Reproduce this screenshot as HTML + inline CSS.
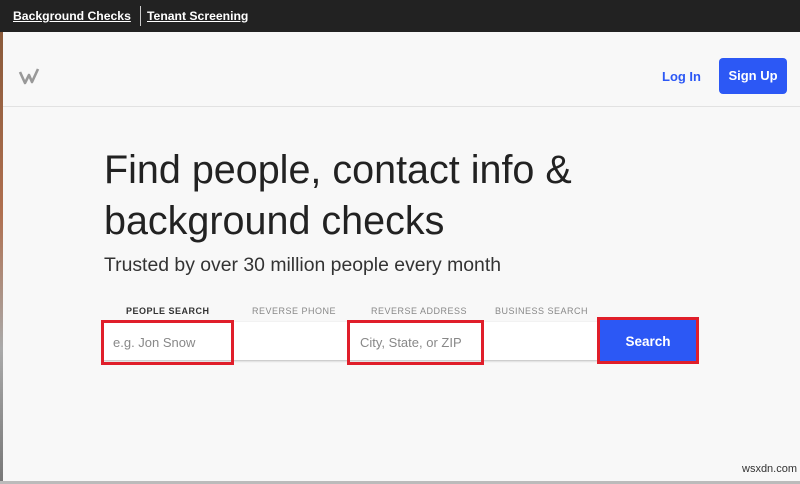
<!DOCTYPE html>
<html><head><style>
body{margin:0;width:800px;height:484px;background:#f8f8f8;font-family:"Liberation Sans",sans-serif;position:relative;overflow:hidden}
.top{position:absolute;left:0;top:0;width:800px;height:32px;background:#222}
.top a{position:absolute;top:9px;color:#fff;font-weight:bold;font-size:12.2px;text-decoration:underline}
.edge{position:absolute;left:0;top:32px;width:3px;height:452px;background:linear-gradient(#8a5a3a,#b07050 40%,#aaa 70%,#777)}
.hdr{position:absolute;left:3px;top:32px;width:797px;height:74px;background:#f8f8f8;border-bottom:1px solid #e2e2e2}
.abs{position:absolute}
h1{position:absolute;left:104px;top:145px;margin:0;font-weight:normal;font-size:39.5px;line-height:51px;color:#222}
.sub{left:104px;top:254px;font-size:19.4px;color:#333}
.tab{top:306px;font-size:9px;letter-spacing:.5px;color:#888}
.box{border:3px solid #e01e2a;box-sizing:border-box}
</style></head><body>
<div class="top"><a style="left:13px">Background Checks</a><div class="abs" style="left:140px;top:6px;width:1px;height:20px;background:#ccc"></div><a style="left:147px">Tenant Screening</a></div>
<div class="edge"></div>
<div class="hdr">
<svg class="abs" style="left:14px;top:34px" width="24" height="20"><path d="M3 6 L8 17 L12 9 L15 16 L21 3" stroke="#999" stroke-width="2.6" fill="none" stroke-linejoin="round"/></svg>
<div class="abs" style="left:659px;top:37px;color:#2c58f5;font-weight:bold;font-size:13px">Log In</div>
<div class="abs" style="left:716px;top:26px;width:68px;height:36px;background:#2c58f5;border-radius:4px;color:#fff;font-weight:bold;font-size:13px;text-align:center;line-height:36px">Sign Up</div>
</div>
<h1>Find people, contact info &amp;<br>background checks</h1>
<div class="abs sub">Trusted by over 30 million people every month</div>
<div class="abs tab" style="left:126px;color:#333;font-weight:bold">PEOPLE SEARCH</div>
<div class="abs tab" style="left:252px">REVERSE PHONE</div>
<div class="abs tab" style="left:371px">REVERSE ADDRESS</div>
<div class="abs tab" style="left:495px">BUSINESS SEARCH</div>
<div class="abs" style="left:103px;top:322px;width:495px;height:38px;background:#fff;box-shadow:0 1px 2px #bbb"></div>
<div class="abs" style="left:113px;top:335px;font-size:13px;color:#888">e.g. Jon Snow</div>
<div class="abs" style="left:360px;top:335px;font-size:13px;color:#888">City, State, or ZIP</div>
<div class="abs" style="left:600px;top:320px;width:96px;height:41px;background:#2c58f5;color:#fff;font-weight:bold;font-size:13.5px;text-align:center;line-height:43px">Search</div>
<div class="abs box" style="left:101px;top:320px;width:133px;height:45px"></div>
<div class="abs box" style="left:347px;top:320px;width:137px;height:45px"></div>
<div class="abs box" style="left:597px;top:317px;width:102px;height:47px"></div>
<div class="abs" style="left:742px;top:463px;font-size:11px;color:#333">wsxdn.com</div>
<div class="abs" style="left:0;top:481px;width:800px;height:3px;background:#bbb"></div>
</body></html>
